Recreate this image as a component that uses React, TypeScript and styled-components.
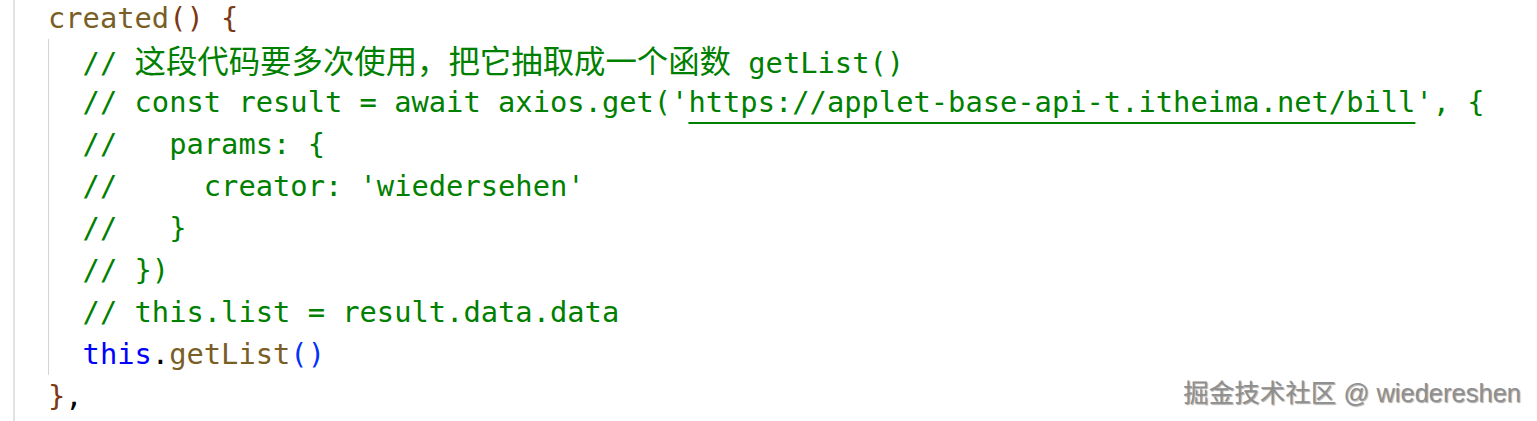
import React from "react";
import styled, { createGlobalStyle } from "styled-components";

const Global = createGlobalStyle`
  html, body { margin: 0; padding: 0; background: #ffffff; }
  body { width: 1537px; height: 421px; overflow: hidden; }
`;

const Page = styled.div`
  position: relative;
  width: 1537px;
  height: 421px;
  overflow: hidden;
  background: #ffffff;
  display: flex;
`;

const Editor = styled.div`
  margin-left: 13px;
  flex: 1;
  align-self: stretch;
  border-left: 2px solid #e2e2e2;
  padding-left: 33px;
  box-sizing: border-box;
  font-family: "DejaVu Sans Mono", "Liberation Mono", monospace;
  font-size: 28.75px;
  line-height: 42px;
  color: #000000;
`;

const Code = styled.div`
  display: flex;
  flex-direction: column;
  margin-top: -3px;
`;

const Line = styled.div`
  white-space: pre;
  height: 42px;
`;

const Block = styled.div`
  display: flex;
  flex-direction: column;
  border-left: 1px solid #d4d4d4;
  padding-left: calc(2ch - 1px);
`;

const Fn = styled.span`
  color: #795e26;
`;

const Bracket = styled.span<{ $level: 1 | 3 }>`
  color: ${(p) => (p.$level === 1 ? "#0431fa" : "#7b3814")};
`;

const Kw = styled.span`
  color: #0000ff;
`;

const Comment = styled.span`
  color: #008000;
`;

const Link = styled.span`
  text-decoration: underline;
  text-decoration-color: #008000;
  text-decoration-thickness: 2px;
  text-underline-offset: 10px;
`;

const Cjk = styled.span`
  font-family: "Noto Sans CJK SC", sans-serif;
  font-size: 31.4px;
  line-height: 42px;
`;

const Watermark = styled.div`
  position: absolute;
  right: 16px;
  top: 378px;
  font-family: "Liberation Sans", "Noto Sans CJK SC", sans-serif;
  font-size: 25.5px;
  line-height: 30px;
  color: #8f8f8f;
  text-shadow: 1px 1px 1px rgba(0, 0, 0, 0.35), -1px -1px 0 rgba(255, 255, 255, 0.9);
  white-space: pre;
`;

export default function App() {
  return (
    <Page>
      <Global />
      <Editor>
        <Code>
          <Line>
            <Fn>created</Fn>
            <Bracket $level={3}>()</Bracket> <Bracket $level={3}>{"{"}</Bracket>
          </Line>
          <Block>
            <Line>
              <Comment>
                {"// "}
                <Cjk>这段代码要多次使用，把它抽取成一个函数</Cjk>
                {" getList()"}
              </Comment>
            </Line>
            <Line>
              <Comment>
                {"// const result = await axios.get('"}
                <Link>https://applet-base-api-t.itheima.net/bill</Link>
                {"', {"}
              </Comment>
            </Line>
            <Line>
              <Comment>{"//   params: {"}</Comment>
            </Line>
            <Line>
              <Comment>{"//     creator: 'wiedersehen'"}</Comment>
            </Line>
            <Line>
              <Comment>{"//   }"}</Comment>
            </Line>
            <Line>
              <Comment>{"// })"}</Comment>
            </Line>
            <Line>
              <Comment>{"// this.list = result.data.data"}</Comment>
            </Line>
            <Line>
              <Kw>this</Kw>.<Fn>getList</Fn>
              <Bracket $level={1}>()</Bracket>
            </Line>
          </Block>
          <Line>
            <Bracket $level={3}>{"}"}</Bracket>,
          </Line>
        </Code>
      </Editor>
      <Watermark>掘金技术社区 @ wiedereshen</Watermark>
    </Page>
  );
}
